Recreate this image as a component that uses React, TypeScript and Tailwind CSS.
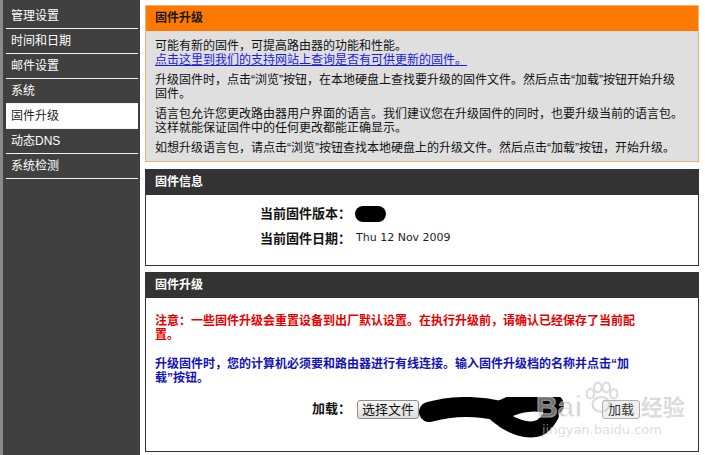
import { clsx } from "clsx"

const navItems = ["管理设置", "时间和日期", "邮件设置", "系统", "固件升级", "动态DNS", "系统检测"]

function Sidebar() {
  return (
    <div className="flex w-[140px] shrink-0">
      <div className="w-[3px] bg-[#8a8a8a]" />
      <div className="flex-1 bg-[#404040] pl-[3px] pr-[2px] pt-[4px]">
        {navItems.map((item) => (
          <div
            key={item}
            className={clsx(
              "h-[25px] border-b border-[#f2f2f2] pl-[5px] text-[12px] leading-[24px]",
              item === "固件升级" ? "bg-white text-[#222]" : "text-white"
            )}
          >
            {item}
          </div>
        ))}
      </div>
    </div>
  )
}

function DarkHeader({ title }: { title: string }) {
  return (
    <div className="h-[25px] bg-[#333333] px-[9px] text-[12px] font-bold leading-[25px] text-white">
      {title}
    </div>
  )
}

export default function App() {
  return (
    <div className="flex h-[455px] w-[705px] overflow-hidden bg-white font-['Liberation_Sans','Noto_Sans_CJK_SC',sans-serif]">
      <Sidebar />

      <main className="ml-[5px] flex w-[554px] flex-col gap-[6px] pt-[5px]">
        {/* Intro */}
        <section className="mb-[1px] h-[157px] border border-[#efb273] bg-[#dfdfdf]">
          <div className="h-[25px] bg-[#ff7800] px-[9px] text-[12px] font-bold leading-[25px] text-[#1a1a1a]">
            固件升级
          </div>
          <div className="flex flex-col gap-[6px] px-[9px] pt-[8px] text-[12px] leading-[14px] text-[#111]">
            <p className="whitespace-nowrap">
              可能有新的固件，可提高路由器的功能和性能。
              <br />
              <a href="#" className="text-[#1c1ce0] underline">
                点击这里到我们的支持网站上查询是否有可供更新的固件。
              </a>
            </p>
            <p className="whitespace-nowrap">
              升级固件时，点击“浏览”按钮，在本地硬盘上查找要升级的固件文件。然后点击“加载”按钮开始升级
              <br />
              固件。
            </p>
            <p className="whitespace-nowrap">
              语言包允许您更改路由器用户界面的语言。我们建议您在升级固件的同时，也要升级当前的语言包。
              <br />
              这样就能保证固件中的任何更改都能正确显示。
            </p>
            <p className="whitespace-nowrap">
              如想升级语言包，请点击“浏览”按钮查找本地硬盘上的升级文件。然后点击“加载”按钮，开始升级。
            </p>
          </div>
        </section>

        {/* Firmware info */}
        <section className="h-[97px] border border-[#333]">
          <DarkHeader title="固件信息" />
          <div className="pt-[6px]">
            <div className="flex h-[25px] items-center">
              <span className="w-[205px] text-right text-[13px] font-bold text-[#111]">当前固件版本：</span>
              <span className="ml-[4px] inline-block h-[16px] w-[31px] rounded-full bg-black" />
            </div>
            <div className="flex h-[25px] items-center">
              <span className="w-[205px] text-right text-[13px] font-bold text-[#111]">当前固件日期：</span>
              <span className="ml-[5px] font-['DejaVu_Sans',sans-serif] text-[11px] text-[#222]">Thu 12 Nov 2009</span>
            </div>
          </div>
        </section>

        {/* Upgrade */}
        <section className="relative h-[180px] border border-[#333]">
          <DarkHeader title="固件升级" />
          <div className="px-[9px] pt-[16px]">
            <p className="whitespace-nowrap text-[12px] font-bold leading-[14px] text-[#e80000]">
              注意：一些固件升级会重置设备到出厂默认设置。在执行升级前，请确认已经保存了当前配
              <br />
              置。
            </p>
            <p className="mt-[15px] whitespace-nowrap text-[12px] font-bold leading-[14px] text-[#1414b4]">
              升级固件时，您的计算机必须要和路由器进行有线连接。输入固件升级档的名称并点击“加
              <br />
              载”按钮。
            </p>
          </div>
          <div className="mt-[12px] flex items-start">
            <span className="mt-[2px] w-[205px] text-right text-[13px] font-bold leading-[20px] text-[#111]">加载：</span>
            <button className="ml-[6px] mt-[3px] h-[19px] rounded-[3px] border border-[#8c8c8c] bg-gradient-to-b from-[#f8f8f8] to-[#dcdcdc] px-[4px] text-[13px] leading-[17px] text-[#111]">
              选择文件
            </button>
            <svg width="183" height="46" viewBox="0 0 183 46" className="shrink-0">
              <path
                d="M10 15 C 35 8, 60 9, 82 14 C 98 4, 118 2, 135 8"
                fill="none"
                stroke="#000"
                strokeWidth="20"
                strokeLinecap="round"
              />
              <path
                d="M78 18 C 92 30, 110 36, 122 30 C 128 26, 130 22, 132 18"
                fill="none"
                stroke="#000"
                strokeWidth="16"
                strokeLinecap="round"
              />
            </svg>
            <button className="mt-[3px] h-[19px] w-[38px] rounded-[3px] border border-[#b0b0b0] bg-[#f0f0f0] text-[13px] leading-[17px] text-[#333]">
              加载
            </button>
          </div>

          {/* watermark */}
          <div className="pointer-events-none absolute left-[390px] top-[107px] flex flex-col items-start opacity-60">
            <div className="flex items-end">
              <span className="text-[30px] font-bold leading-[30px] text-[#bdbdbd] [-webkit-text-stroke:1px_#ffffff]">Bai</span>
              <svg width="36" height="36" viewBox="0 0 34 34" className="mb-[6px]">
                <g fill="none" stroke="#c4c4c4" strokeWidth="2">
                  <ellipse cx="17" cy="23" rx="8" ry="7" />
                  <ellipse cx="7" cy="13" rx="3.5" ry="4.5" />
                  <ellipse cx="14" cy="7" rx="3.5" ry="4.5" />
                  <ellipse cx="22" cy="7" rx="3.5" ry="4.5" />
                  <ellipse cx="29" cy="13" rx="3.5" ry="4.5" />
                </g>
              </svg>
              <span className="ml-[22px] text-[22px] font-bold leading-[28px] text-[#c4c4c4]">经验</span>
            </div>
            <span className="ml-[6px] mt-[1px] font-['DejaVu_Sans',sans-serif] text-[13px] leading-[14px] text-[#c8c8c8]">
              jingyan.baidu.com
            </span>
          </div>
        </section>
      </main>
    </div>
  )
}
